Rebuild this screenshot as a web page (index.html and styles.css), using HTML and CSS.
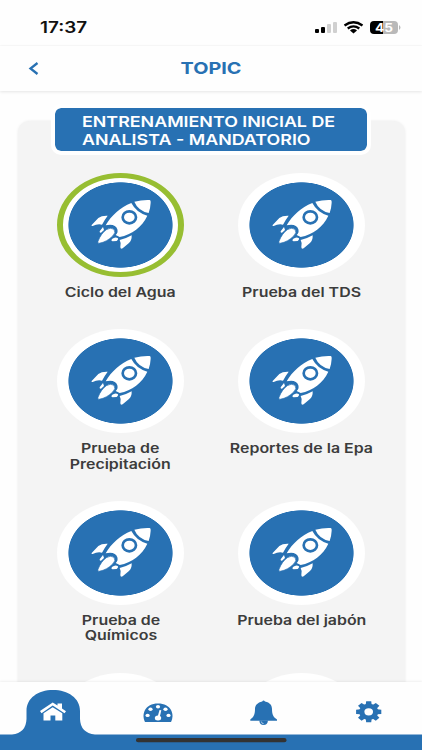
FILE: index.html
```
<!DOCTYPE html>
<html lang="es">
<head>
    <meta charset="UTF-8">
    <meta name="viewport" content="width=device-width, initial-scale=1.0">
    <title>Topic</title>
    <link rel="stylesheet" href="styles.css">
</head>
<body>
    <svg width="0" height="0" class="sprite">
        <symbol id="rocket" viewBox="2 0 210 210">
            <g fill="#fff">
                <path d="M147 35Q170 29 193 30Q197 31 196 38Q195 56 190 69Q158 62 147 35Z"/>
                <path d="M138 39C104 52 78 77 61 106Q90 100 96 118Q99 129 91 135L103 141C139 134 171 111 186 77Q153 68 138 39Z"/>
                <path d="M67 77Q49 76 39 84L19 105Q17 109 22 108Q36 101 50 104Q58 89 67 77Z"/>
                <path d="M139 136Q140 151 130 160L112 175Q105 178 105 171Q108 158 103 150Q122 146 139 136Z"/>
                <path d="M53 111L43 124Q42 129 47 128L56 120ZM80 147Q90 139 98 145Q99 150 94 153L82 154Q76 153 80 147Z"/>
                <path stroke="#2871b3" stroke-width="2" d="M63 119Q76 111 86 118Q93 128 82 138C71 149 58 157 41 160Q36 161 38 154C44 138 53 126 63 119Z"/>
            </g>
            <ellipse cx="132" cy="82" rx="20" ry="18" fill="none" stroke="#2871b3" stroke-width="8"/>
        </symbol>
    </svg>

    <div class="screen">
        <div class="status-bar">
            <span class="time">17:37</span>
            <svg class="status-icons" width="88" height="18" viewBox="0 0 88 18">
                <rect x="1" y="10" width="4" height="4" rx="1"/>
                <rect x="7" y="8" width="4" height="6" rx="1"/>
                <rect x="13" y="5" width="4" height="9" rx="1" fill="#d0d0d0"/>
                <rect x="19" y="3" width="4" height="11" rx="1" fill="#d0d0d0"/>
                <g fill="none" stroke="#000" stroke-width="2.3">
                    <path d="M30.500 6.500Q39.500 0 48.500 6.500"/>
                    <path d="M33.700 9.500Q39.500 5.200 45.300 9.500"/>
                </g>
                <path d="M36 11.500Q39.500 8.700 43 11.500L39.500 14.500Z"/>
                <path d="M60 2H69V15H60Q56 15 56 11V6Q56 2 60 2Z"/>
                <path d="M69 2H80Q84 2 84 6V11Q84 15 80 15H69Z" fill="#b9b9b9"/>
                <path d="M85 6Q88 8.500 85 11Z" fill="#b9b9b9"/>
                <text x="61" y="12.500" textLength="18" lengthAdjust="spacingAndGlyphs">45</text>
            </svg>
        </div>

        <header>
            <svg class="back" width="14" height="16" viewBox="0 0 14 16"><path d="M11.500 2L4.500 7.500L11.500 13"/></svg>
            <h1>TOPIC</h1>
        </header>

        <main>
            <section class="panel">
                <h2><span>ENTRENAMIENTO INICIAL DE<br>ANALISTA - MANDATORIO</span></h2>
                <div class="topics">
                    <div class="topic active">
                        <div class="badge"><svg><use href="#rocket"/></svg></div>
                        <p>Ciclo del Agua</p>
                    </div>
                    <div class="topic">
                        <div class="badge"><svg><use href="#rocket"/></svg></div>
                        <p>Prueba del TDS</p>
                    </div>
                    <div class="topic">
                        <div class="badge"><svg><use href="#rocket"/></svg></div>
                        <p>Prueba de<br>Precipitación</p>
                    </div>
                    <div class="topic">
                        <div class="badge"><svg><use href="#rocket"/></svg></div>
                        <p>Reportes de la Epa</p>
                    </div>
                    <div class="topic">
                        <div class="badge"><svg><use href="#rocket"/></svg></div>
                        <p>Prueba de<br>Químicos</p>
                    </div>
                    <div class="topic">
                        <div class="badge"><svg><use href="#rocket"/></svg></div>
                        <p>Prueba del jabón</p>
                    </div>
                    <div class="topic">
                        <div class="badge"></div>
                    </div>
                    <div class="topic locked">
                        <div class="badge"></div>
                    </div>
                </div>
            </section>
        </main>

        <nav>
            <svg width="422" height="67" viewBox="0 0 422 67">
                <path fill="#2871b3" d="M0 51.500H12Q26 50 26.500 36V28C26.500 15 38 7 53 7S80 15 80 28V36Q80.500 50 95 51.500H422V67H0Z"/>
                <!-- home -->
                <path fill="#fff" d="M40 28L52.700 19.500L57.500 22.600V20.500H62V25.500L66 28.300L64.500 30.200L52.700 22.400L41.500 30.200Z"/>
                <path fill="#fff" d="M43.500 30.300L52.700 24.200L62.300 30.300V37.500H55.300V32.500H50.500V37.500H43.500Z"/>
                <!-- dashboard -->
                <path fill="#2871b3" d="M145 39C141 31 145 20.500 158 20.500S175 31 171 39Z"/>
                <g fill="#fff">
                    <ellipse cx="147.600" cy="32.400" rx="2.100" ry="1.700"/>
                    <ellipse cx="150.500" cy="26.300" rx="2.100" ry="1.800"/>
                    <ellipse cx="158" cy="23.800" rx="2.100" ry="1.800"/>
                    <ellipse cx="165.500" cy="26.300" rx="2.100" ry="1.800"/>
                    <ellipse cx="168.500" cy="32.400" rx="2.100" ry="1.700"/>
                    <ellipse cx="158" cy="35" rx="3.200" ry="2.500"/>
                    <path d="M159.500 27L161.300 27.300L159.500 35H157.300Z"/>
                </g>
                <!-- bell -->
                <path fill="#2871b3" d="M262.200 18.500Q263.500 16.500 265 18.500C270 19.500 272 22.500 272 26C272 32 273.500 34 277 36.500V37.800H250.300V36.500C253.500 34 255 32 255 26C255 22.500 257.500 19.500 262.200 18.500Z"/>
                <path fill="#2871b3" d="M259.300 37.500H268Q267.500 42 263.600 42T259.300 37.500Z"/>
                <path fill="none" stroke="#fff" stroke-width=".6" d="M261.300 38.500Q261.500 40.700 263.700 40.700"/>
                <!-- settings -->
                <g transform="translate(368.700 28.800) scale(1.200 1)">
                    <g fill="#2871b3">
                        <circle r="8"/>
                        <path id="tooth" d="M-2.500 -7L-2.100 -10.500H2.100L2.500 -7V7L2.100 10.500H-2.100L-2.500 7Z"/>
                        <use href="#tooth" transform="rotate(45)"/>
                        <use href="#tooth" transform="rotate(90)"/>
                        <use href="#tooth" transform="rotate(135)"/>
                    </g>
                    <circle r="3.600" fill="#fff"/>
                </g>
                <rect x="136" y="55" width="150.500" height="4.300" rx="2.100" fill="#333"/>
            </svg>
        </nav>
    </div>
</body>
</html>
```
FILE: styles.css
```
:root {
    --blue: #2871b3;
    --green: #97be32;
    --text-color: #3c3c3c;
}

* {
    margin: 0;
    padding: 0;
    box-sizing: border-box;
}

body {
    background: #fefefe;
    color: var(--text-color);
    font-family: Inter, "Liberation Sans", sans-serif;
    overflow: hidden;
}

svg {
    display: block;
}

.sprite {
    position: absolute;
}

.screen {
    height: 750px;
    display: flex;
    flex-direction: column;
}

.status-bar {
    height: 46px;
    flex: none;
    display: flex;
    justify-content: space-between;
    padding: 19px 20px 0 40px;
    border-bottom: 1px solid #fafafa;
}

.time {
    font-size: 15.5px;
    line-height: 18px;
    font-weight: 600;
    color: #111;
    transform: scaleX(1.22);
    transform-origin: left;
}

.status-icons text {
    font-size: 11.5px;
    font-weight: 700;
    fill: #fff;
}

header {
    height: 45px;
    flex: none;
    display: grid;
    grid-template-columns: 60px 1fr 60px;
    align-items: center;
    box-shadow: 0 1px 3px rgba(0, 0, 0, 0.1);
}

.back {
    margin-left: 26px;
    fill: none;
    stroke: var(--blue);
    stroke-width: 2.3;
}

h1 {
    color: var(--blue);
    font-size: 16.5px;
    font-weight: 700;
    text-align: center;
    padding-bottom: 1px;
    transform: scaleX(1.2);
}

main {
    flex: 1;
    min-height: 0;
    overflow: hidden;
    padding: 30px 17px 0 18px;
}

.panel {
    height: 700px;
    background: #f4f4f4;
    border-radius: 12px;
    box-shadow: 0 0 3px rgba(0, 0, 0, 0.08);
}

h2 {
    width: 320px;
    height: 51px;
    margin-left: 33px;
    padding: 5px 0 0 27px;
    background: var(--blue);
    background-clip: padding-box;
    border: 4px solid #fff;
    border-radius: 10px;
    color: #fff;
    font-size: 15px;
    line-height: 17.5px;
    font-weight: 600;
    white-space: nowrap;
    transform: translateY(-17px);
}

h2 span {
    display: inline-block;
    transform: scaleX(1.19);
    transform-origin: left;
}

.topics {
    display: grid;
    grid-template-columns: 181px 181px;
    grid-template-rows: 156.5px 171.5px 172px 171.5px;
    margin: 0.5px 0 0 12px;
}

.topic {
    display: flex;
    flex-direction: column;
    align-items: center;
    gap: 8px;
}

.badge {
    width: 127px;
    height: 104px;
    flex: none;
    display: flex;
    align-items: center;
    justify-content: center;
    border-radius: 50%;
    background: radial-gradient(ellipse 52.5px 43px at center, var(--blue) 98.500%, #fff 100%);
}

.badge svg {
    width: 70px;
    height: 70px;
}

.active .badge {
    border: solid var(--green);
    border-width: 5px 6px;
}

.locked .badge {
    background: radial-gradient(ellipse 52.5px 43px at center, #aaa 98.500%, #fff 100%);
}

.topic p {
    font-size: 13px;
    line-height: 15.5px;
    font-weight: 600;
    text-align: center;
    white-space: nowrap;
    transform: scaleX(1.225);
}

nav {
    height: 68px;
    flex: none;
    padding-top: 1px;
    background: #fefefe;
    box-shadow: 0 -1px 2px rgba(0, 0, 0, 0.06);
}
```
